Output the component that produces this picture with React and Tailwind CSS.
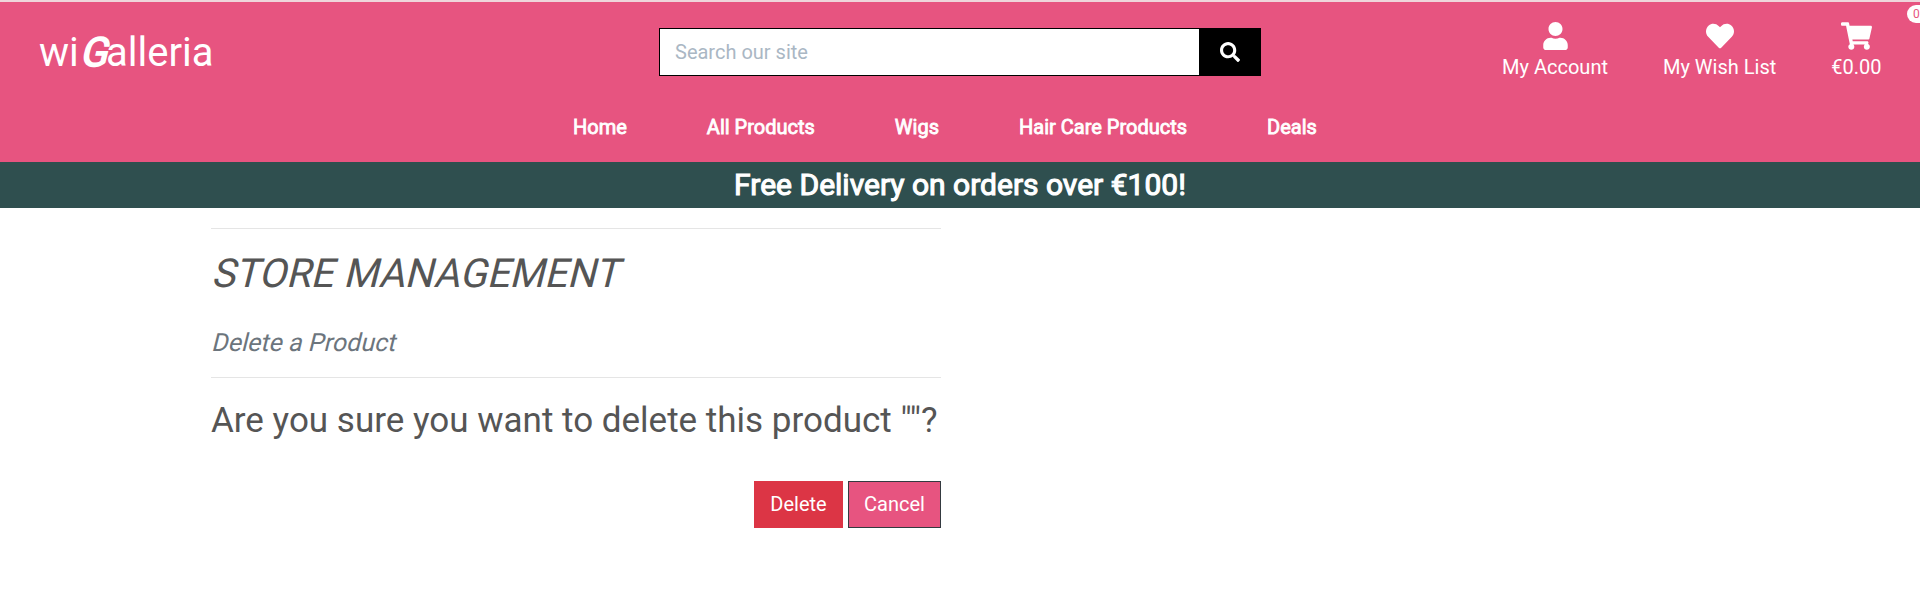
import { FaUser, FaHeart, FaShoppingCart, FaSearch } from "react-icons/fa";

const links = ["Home", "All Products", "Wigs", "Hair Care Products", "Deals"];

const accountLinks = [
  { label: "My Account", Icon: FaUser, iconClass: "h-[28px] w-[25px]" },
  { label: "My Wish List", Icon: FaHeart, iconClass: "h-[28px] w-[28px]" },
  { label: "€0.00", Icon: FaShoppingCart, iconClass: "h-[28px] w-[31px]" },
];

function Header() {
  return (
    <header className="relative flex h-[162px] flex-col overflow-hidden border-t-2 border-[#efd5db] bg-[#e75480] text-white">
      <div className="grid h-[101px] grid-cols-3 items-start">
        <a className="pt-[21px] pl-[39px] text-[40px] leading-[60px]">
          wi
          <span className="inline-block origin-[50%_75%] -skew-x-[14deg] [-webkit-text-stroke:1.6px_white]">G</span>
          alleria
        </a>
        <form className="mx-[19px] mt-[26px] flex h-[48px] border border-black bg-white">
          <input
            className="min-w-0 flex-1 px-[15px] text-[20px] outline-none placeholder:text-[#aab7c4]"
            placeholder="Search our site"
          />
          <button type="button" className="flex w-[61px] items-center justify-center bg-black">
            <FaSearch size={20} />
          </button>
        </form>
        <ul className="flex justify-end gap-[55px] pt-[20px] pr-[38.5px]">
          {accountLinks.map(({ label, Icon, iconClass }) => (
            <li key={label} className="flex flex-col items-center">
              <Icon className={iconClass} />
              <span className="mt-[1.5px] text-[20px] leading-[30px]">{label}</span>
            </li>
          ))}
        </ul>
      </div>
      <nav className="flex gap-[80px] pt-[9px] pl-[573px]">
        {links.map((link) => (
          <a key={link} className="text-[20px] leading-[30px] [-webkit-text-stroke:0.8px_white]">
            {link}
          </a>
        ))}
      </nav>
      <span className="absolute top-[3px] left-[1907px] flex h-[18px] w-[21px] items-center rounded-full bg-white pl-[6px] text-[12px] text-[#e75480]">
        0
      </span>
    </header>
  );
}

export default function App() {
  return (
    <div className="min-h-[615px] bg-white font-['Roboto',sans-serif] text-[#555]">
      <Header />
      <div className="h-[46px] bg-[#2f4f4f] text-center text-[30px] leading-[46px] text-white [-webkit-text-stroke:1.1px_white]">
        Free Delivery on orders over €100!
      </div>
      <main className="ml-[211px] w-[730px] pt-[20px]">
        <hr className="border-[#e5e5e5]" />
        <h2 className="mt-[21px] w-fit origin-[50%_78%] -skew-x-[14deg] text-[40px] leading-[48px]">
          STORE MANAGEMENT
        </h2>
        <h5 className="mt-[30px] w-fit origin-[50%_78%] -skew-x-[14deg] text-[25px] leading-[30px] text-[#6c757d]">
          Delete a Product
        </h5>
        <hr className="mt-[19px] border-[#e5e5e5]" />
        <p className="mt-[22px] text-[35px] leading-[42px] whitespace-nowrap">
          Are you sure you want to delete this product ""?
        </p>
        <div className="mt-[39px] flex justify-end gap-[5px] text-[20px] leading-[30px] text-white">
          <button className="h-[47px] w-[89px] bg-[#dc3545] pb-[2px]">Delete</button>
          <button className="h-[47px] w-[93px] border border-[#343a40] bg-[#e75480] pb-[2px]">Cancel</button>
        </div>
      </main>
    </div>
  );
}
